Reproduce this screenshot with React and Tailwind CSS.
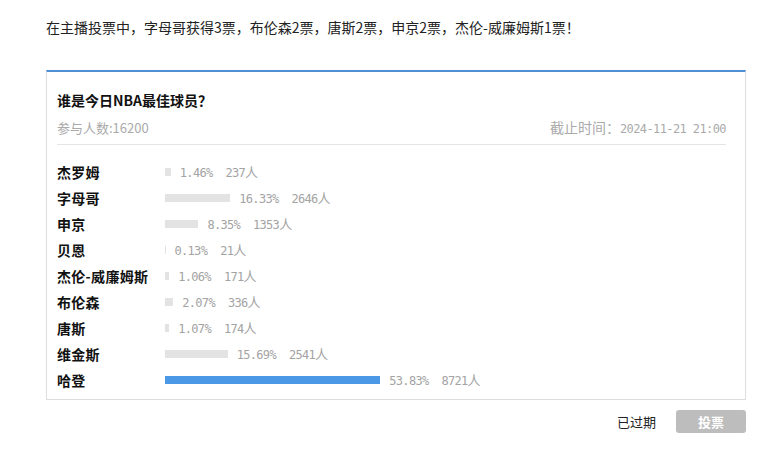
import React from "react";

const players = [
  { name: "杰罗姆", pct: 1.46, count: 237 },
  { name: "字母哥", pct: 16.33, count: 2646 },
  { name: "申京", pct: 8.35, count: 1353 },
  { name: "贝恩", pct: 0.13, count: 21 },
  { name: "杰伦-威廉姆斯", pct: 1.06, count: 171 },
  { name: "布伦森", pct: 2.07, count: 336 },
  { name: "唐斯", pct: 1.07, count: 174 },
  { name: "维金斯", pct: 15.69, count: 2541 },
  { name: "哈登", pct: 53.83, count: 8721 },
];

const sans = "font-['Noto_Sans_CJK_SC',sans-serif]";
const mono = "font-['DejaVu_Sans_Mono','Noto_Sans_CJK_SC',monospace]";

const App = () => {
  const top = Math.max(...players.map((p) => p.pct));

  return (
    <div className={`w-[761px] h-[452px] bg-white px-[46px] text-[#222] ${sans}`}>
      {/* ===== SUMMARY ===== */}
      <p className="pt-[17px] text-[14px] leading-[20px] text-[#222]">
        在主播投票中，字母哥获得3票，布伦森2票，唐斯2票，申京2票，杰伦-威廉姆斯1票！
      </p>

      {/* ===== POLL CARD ===== */}
      <div className="mt-[33px] w-[700px] border-t-2 border-t-[#4f8fd6] border-x border-b border-[#dddddd] pl-[10px] pr-[19px] pt-[18px] pb-[6px]">
        <h2 className="text-[14px] leading-[20px] font-bold text-[#111]">谁是今日NBA最佳球员？</h2>

        <div className="mt-[7px] h-[28px] pb-[6px] border-b border-[#e5e5e5] flex items-center justify-between leading-[20px]">
          <span className="text-[13px] text-[#aaa]">参与人数:16200</span>
          <span className="text-[14px] text-[#aaa]">
            截止时间：<span className={`${mono} text-[12px] tracking-[-0.6px]`}>2024-11-21 21:00</span>
          </span>
        </div>

        <ul className="pt-[14px]">
          {players.map((p) => (
            <li key={p.name} className="flex items-center h-[26px]">
              <span className="w-[108px] shrink-0 text-[14px] font-bold text-[#111] tracking-[0.3px]">{p.name}</span>
              <div
                className={`h-[8px] ${p.pct === top ? "bg-[#4a98e6]" : "bg-[#e3e3e3]"}`}
                style={{ width: `${(p.pct / 100) * 400}px` }}
              />
              <span className={`ml-[9px] text-[12px] tracking-[-0.7px] text-[#a3a3a3] ${mono}`}>
                {p.pct.toFixed(2)}%
                <span className="ml-[13px]">{p.count}</span>
                <span className={`${sans} text-[13px] tracking-normal`}>人</span>
              </span>
            </li>
          ))}
        </ul>
      </div>

      {/* ===== FOOTER ===== */}
      <div className="mt-[10px] w-[700px] flex items-center justify-end gap-[20px]">
        <span className="text-[13px] text-[#222]">已过期</span>
        <button className="w-[70px] h-[23px] rounded-[3px] bg-[#bdbdbd] text-white text-[13px] font-bold leading-[23px]">
          投票
        </button>
      </div>
    </div>
  );
};

export default App;
